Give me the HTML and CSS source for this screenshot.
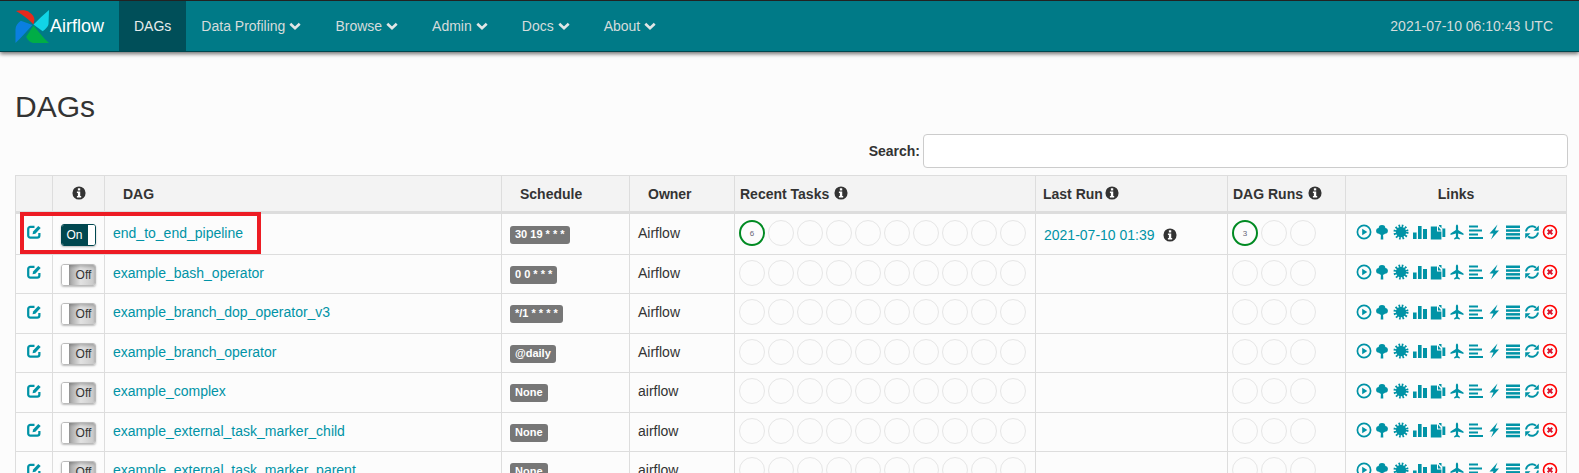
FILE: index.html
```html
<!DOCTYPE html>
<html lang="en">
  <head>
    <meta charset="UTF-8" />
    <title>Airflow - DAGs</title>
    <link rel="stylesheet" href="styles.css">
  </head>
  <body>
    <!-- Icon set, reused through the table -->
    <svg class="defs" aria-hidden="true">
      <symbol id="i-edit" viewBox="0 0 16 16"><path d="M13.2 9.5v2.7a2.3 2.3 0 0 1-2.3 2.3H3.600a2.3 2.3 0 0 1-2.3-2.3V5.300A2.3 2.3 0 0 1 3.600 3H8" fill="none" stroke="currentColor" stroke-width="2.4"/><path d="M6.500 8l5.500-6 2.600 2.300-5.700 6-3 .7z"/></symbol>
      <symbol id="i-info" viewBox="0 0 16 16"><circle cx="8" cy="8" r="7.5"/><rect x="6.7" y="2.6" width="2.7" height="2.5" fill="#fff"/><path d="M5.6 6.4h3.8v5h1.1V13H5.6v-1.6h1.1V8H5.6z" fill="#fff"/></symbol>
      <symbol id="i-play" viewBox="0 0 16 16"><circle cx="8" cy="8" r="6.6" fill="none" stroke="currentColor" stroke-width="1.7"/><path d="M6.2 4.7v6.6L11.3 8z"/></symbol>
      <symbol id="i-tree" viewBox="0 0 16 16"><circle cx="8" cy="4.4" r="3.4"/><circle cx="5" cy="6.800" r="2.900"/><circle cx="11" cy="6.800" r="2.900"/><circle cx="8" cy="7.800" r="3.200"/><path d="M7 9h2l.3 6.500H6.700z"/></symbol>
      <symbol id="i-sun" viewBox="0 0 16 16"><circle cx="8" cy="8" r="5.2"/><circle cx="8" cy="8" r="6" fill="none" stroke="currentColor" stroke-width="3" stroke-dasharray="1.6 1.54"/></symbol>
      <symbol id="i-bars" viewBox="0 0 16 16"><rect x="1" y="8.5" width="3.6" height="6.5"/><rect x="6" y="2" width="3.6" height="13"/><rect x="11" y="5" width="4" height="10"/></symbol>
      <symbol id="i-files" viewBox="0 0 16 16"><path d="M.8 2.500h6.200v4.900h4.400V15.500H.8z"/><path d="M8 2.500l3.400 3.900H8z"/><path d="M9 1h2.500v3.500H15.300v8.500h-2.900V5L9 1.900z"/></symbol>
      <symbol id="i-plane" viewBox="0 0 16 16"><path d="M8 .6c.7 0 1.100 1 1.100 2.200v3.300l5.400 3.400v1.600L9.100 9.500v3.400l1.700 1.300v1.200L8 14.800l-2.800.6v-1.200l1.700-1.300V9.500L1.500 11.100V9.500l5.400-3.400V2.800C6.900 1.600 7.300.6 8 .6z"/></symbol>
      <symbol id="i-align" viewBox="0 0 16 16"><rect x="1" y="1.500" width="9" height="2"/><rect x="1" y="5.500" width="13" height="2"/><rect x="1" y="9.500" width="9" height="2"/><rect x="1" y="13" width="14" height="2"/></symbol>
      <symbol id="i-bolt" viewBox="0 0 16 16"><path d="M11.500.5L3.500 9.500h4L5 15.500 13 6.500H9z"/></symbol>
      <symbol id="i-list" viewBox="0 0 16 16"><rect x="1" y="1.500" width="14" height="2.500"/><rect x="1" y="5.300" width="14" height="2.500"/><rect x="1" y="9.100" width="14" height="2.500"/><rect x="1" y="12.800" width="14" height="2.500"/></symbol>
      <symbol id="i-refresh" viewBox="0 0 16 16"><path d="M2 7.500A6 6 0 0 1 12 3.800" fill="none" stroke="currentColor" stroke-width="1.900"/><path d="M14.800 1.500v5.300H9.500z"/><path d="M14 8.500A6 6 0 0 1 4 12.200" fill="none" stroke="currentColor" stroke-width="1.900"/><path d="M1.200 14.500V9.200h5.300z"/></symbol>
      <symbol id="i-remove" viewBox="0 0 16 16"><circle cx="8" cy="8" r="6.500" fill="none" stroke="#f00" stroke-width="1.600"/><path d="M5.700 5.700l4.600 4.600M10.300 5.700l-4.600 4.600" stroke="#d9142c" stroke-width="2"/></symbol>
    </svg>

    <!-- Top Navigation -->
    <nav class="navbar">
      <a class="brand" href="#">
        <svg class="logo" viewBox="0 0 36 36">
          <path d="M1 2C6 1 12 1 15 3.500 18 5.500 20 8 20 11L19 16C15 11 8 6 1 2z" fill="#e8291c"/>
          <path d="M35 1L34.500 15C34.500 18 31 21 28.500 23L19 16C24 11 29 6 35 1z" fill="#11d4e6"/>
          <path d="M35 35H20C16 35 13 32 11.500 28.500L19 17C24 23 29 30 35 35z" fill="#00ad46"/>
          <path d="M.5 35V21C.5 17 3 14 6 12L18 16.500C12 23 6 30 .5 35z" fill="#0a7fe0"/>
        </svg>
        <span>Airflow</span>
      </a>
      <ul class="nav-list">
        <li class="nav-item active"><a href="#">DAGs</a></li>
        <li class="nav-item"><a href="#">Data Profiling<svg class="chevron" viewBox="0 0 12 9"><path d="M1.300 1.700L6 6.300l4.700-4.600" /></svg></a></li>
        <li class="nav-item"><a href="#">Browse<svg class="chevron" viewBox="0 0 12 9"><path d="M1.300 1.700L6 6.300l4.700-4.600" /></svg></a></li>
        <li class="nav-item"><a href="#">Admin<svg class="chevron" viewBox="0 0 12 9"><path d="M1.300 1.700L6 6.300l4.700-4.600" /></svg></a></li>
        <li class="nav-item"><a href="#">Docs<svg class="chevron" viewBox="0 0 12 9"><path d="M1.300 1.700L6 6.300l4.700-4.600" /></svg></a></li>
        <li class="nav-item"><a href="#">About<svg class="chevron" viewBox="0 0 12 9"><path d="M1.300 1.700L6 6.300l4.700-4.600" /></svg></a></li>
      </ul>
      <span class="clock">2021-07-10 06:10:43 UTC</span>
    </nav>

    <main class="page">
      <h1>DAGs</h1>

      <div class="search-row">
        <label for="search">Search:</label>
        <input type="text" id="search" />
      </div>

      <div class="table-wrap">
        <table>
          <colgroup>
            <col class="c-edit" /><col class="c-toggle" /><col class="c-dag" /><col class="c-schedule" /><col class="c-owner" /><col class="c-tasks" /><col class="c-last" /><col class="c-runs" /><col class="c-links" />
          </colgroup>
          <thead>
            <tr>
              <th></th>
              <th class="center"><svg class="ico-info"><use href="#i-info" /></svg></th>
              <th class="wide">DAG</th>
              <th class="wide">Schedule</th>
              <th class="wide">Owner</th>
              <th>Recent Tasks <svg class="ico-info"><use href="#i-info" /></svg></th>
              <th class="th-last">Last Run <svg class="ico-info"><use href="#i-info" /></svg></th>
              <th>DAG Runs <svg class="ico-info"><use href="#i-info" /></svg></th>
              <th class="center">Links</th>
            </tr>
          </thead>
          <tbody>
            <tr>
              <td class="center"><svg class="ico-edit"><use href="#i-edit" /></svg></td>
              <td class="center"><span class="toggle on"><span class="toggle-label">On</span><span class="toggle-handle"></span></span></td>
              <td><a href="#">end_to_end_pipeline</a></td>
              <td><span class="label">30 19 * * *</span></td>
              <td>Airflow</td>
              <td><div class="dots"><span class="dot success">6</span><span class="dot"></span><span class="dot"></span><span class="dot"></span><span class="dot"></span><span class="dot"></span><span class="dot"></span><span class="dot"></span><span class="dot"></span><span class="dot"></span></div></td>
              <td class="last-run"><a href="#">2021-07-10 01:39</a><svg class="ico-info"><use href="#i-info" /></svg></td>
              <td><div class="dots"><span class="dot success">3</span><span class="dot"></span><span class="dot"></span></div></td>
              <td><div class="links"><svg><use href="#i-play" /></svg><svg><use href="#i-tree" /></svg><svg><use href="#i-sun" /></svg><svg><use href="#i-bars" /></svg><svg><use href="#i-files" /></svg><svg><use href="#i-plane" /></svg><svg><use href="#i-align" /></svg><svg><use href="#i-bolt" /></svg><svg><use href="#i-list" /></svg><svg><use href="#i-refresh" /></svg><svg><use href="#i-remove" /></svg></div></td>
            </tr>
            <tr>
              <td class="center"><svg class="ico-edit"><use href="#i-edit" /></svg></td>
              <td class="center"><span class="toggle"><span class="toggle-handle"></span><span class="toggle-label">Off</span></span></td>
              <td><a href="#">example_bash_operator</a></td>
              <td><span class="label">0 0 * * *</span></td>
              <td>Airflow</td>
              <td><div class="dots"><span class="dot"></span><span class="dot"></span><span class="dot"></span><span class="dot"></span><span class="dot"></span><span class="dot"></span><span class="dot"></span><span class="dot"></span><span class="dot"></span><span class="dot"></span></div></td>
              <td></td>
              <td><div class="dots"><span class="dot"></span><span class="dot"></span><span class="dot"></span></div></td>
              <td><div class="links"><svg><use href="#i-play" /></svg><svg><use href="#i-tree" /></svg><svg><use href="#i-sun" /></svg><svg><use href="#i-bars" /></svg><svg><use href="#i-files" /></svg><svg><use href="#i-plane" /></svg><svg><use href="#i-align" /></svg><svg><use href="#i-bolt" /></svg><svg><use href="#i-list" /></svg><svg><use href="#i-refresh" /></svg><svg><use href="#i-remove" /></svg></div></td>
            </tr>
            <tr>
              <td class="center"><svg class="ico-edit"><use href="#i-edit" /></svg></td>
              <td class="center"><span class="toggle"><span class="toggle-handle"></span><span class="toggle-label">Off</span></span></td>
              <td><a href="#">example_branch_dop_operator_v3</a></td>
              <td><span class="label">*/1 * * * *</span></td>
              <td>Airflow</td>
              <td><div class="dots"><span class="dot"></span><span class="dot"></span><span class="dot"></span><span class="dot"></span><span class="dot"></span><span class="dot"></span><span class="dot"></span><span class="dot"></span><span class="dot"></span><span class="dot"></span></div></td>
              <td></td>
              <td><div class="dots"><span class="dot"></span><span class="dot"></span><span class="dot"></span></div></td>
              <td><div class="links"><svg><use href="#i-play" /></svg><svg><use href="#i-tree" /></svg><svg><use href="#i-sun" /></svg><svg><use href="#i-bars" /></svg><svg><use href="#i-files" /></svg><svg><use href="#i-plane" /></svg><svg><use href="#i-align" /></svg><svg><use href="#i-bolt" /></svg><svg><use href="#i-list" /></svg><svg><use href="#i-refresh" /></svg><svg><use href="#i-remove" /></svg></div></td>
            </tr>
            <tr>
              <td class="center"><svg class="ico-edit"><use href="#i-edit" /></svg></td>
              <td class="center"><span class="toggle"><span class="toggle-handle"></span><span class="toggle-label">Off</span></span></td>
              <td><a href="#">example_branch_operator</a></td>
              <td><span class="label">@daily</span></td>
              <td>Airflow</td>
              <td><div class="dots"><span class="dot"></span><span class="dot"></span><span class="dot"></span><span class="dot"></span><span class="dot"></span><span class="dot"></span><span class="dot"></span><span class="dot"></span><span class="dot"></span><span class="dot"></span></div></td>
              <td></td>
              <td><div class="dots"><span class="dot"></span><span class="dot"></span><span class="dot"></span></div></td>
              <td><div class="links"><svg><use href="#i-play" /></svg><svg><use href="#i-tree" /></svg><svg><use href="#i-sun" /></svg><svg><use href="#i-bars" /></svg><svg><use href="#i-files" /></svg><svg><use href="#i-plane" /></svg><svg><use href="#i-align" /></svg><svg><use href="#i-bolt" /></svg><svg><use href="#i-list" /></svg><svg><use href="#i-refresh" /></svg><svg><use href="#i-remove" /></svg></div></td>
            </tr>
            <tr>
              <td class="center"><svg class="ico-edit"><use href="#i-edit" /></svg></td>
              <td class="center"><span class="toggle"><span class="toggle-handle"></span><span class="toggle-label">Off</span></span></td>
              <td><a href="#">example_complex</a></td>
              <td><span class="label">None</span></td>
              <td>airflow</td>
              <td><div class="dots"><span class="dot"></span><span class="dot"></span><span class="dot"></span><span class="dot"></span><span class="dot"></span><span class="dot"></span><span class="dot"></span><span class="dot"></span><span class="dot"></span><span class="dot"></span></div></td>
              <td></td>
              <td><div class="dots"><span class="dot"></span><span class="dot"></span><span class="dot"></span></div></td>
              <td><div class="links"><svg><use href="#i-play" /></svg><svg><use href="#i-tree" /></svg><svg><use href="#i-sun" /></svg><svg><use href="#i-bars" /></svg><svg><use href="#i-files" /></svg><svg><use href="#i-plane" /></svg><svg><use href="#i-align" /></svg><svg><use href="#i-bolt" /></svg><svg><use href="#i-list" /></svg><svg><use href="#i-refresh" /></svg><svg><use href="#i-remove" /></svg></div></td>
            </tr>
            <tr>
              <td class="center"><svg class="ico-edit"><use href="#i-edit" /></svg></td>
              <td class="center"><span class="toggle"><span class="toggle-handle"></span><span class="toggle-label">Off</span></span></td>
              <td><a href="#">example_external_task_marker_child</a></td>
              <td><span class="label">None</span></td>
              <td>airflow</td>
              <td><div class="dots"><span class="dot"></span><span class="dot"></span><span class="dot"></span><span class="dot"></span><span class="dot"></span><span class="dot"></span><span class="dot"></span><span class="dot"></span><span class="dot"></span><span class="dot"></span></div></td>
              <td></td>
              <td><div class="dots"><span class="dot"></span><span class="dot"></span><span class="dot"></span></div></td>
              <td><div class="links"><svg><use href="#i-play" /></svg><svg><use href="#i-tree" /></svg><svg><use href="#i-sun" /></svg><svg><use href="#i-bars" /></svg><svg><use href="#i-files" /></svg><svg><use href="#i-plane" /></svg><svg><use href="#i-align" /></svg><svg><use href="#i-bolt" /></svg><svg><use href="#i-list" /></svg><svg><use href="#i-refresh" /></svg><svg><use href="#i-remove" /></svg></div></td>
            </tr>
            <tr>
              <td class="center"><svg class="ico-edit"><use href="#i-edit" /></svg></td>
              <td class="center"><span class="toggle"><span class="toggle-handle"></span><span class="toggle-label">Off</span></span></td>
              <td><a href="#">example_external_task_marker_parent</a></td>
              <td><span class="label">None</span></td>
              <td>airflow</td>
              <td><div class="dots"><span class="dot"></span><span class="dot"></span><span class="dot"></span><span class="dot"></span><span class="dot"></span><span class="dot"></span><span class="dot"></span><span class="dot"></span><span class="dot"></span><span class="dot"></span></div></td>
              <td></td>
              <td><div class="dots"><span class="dot"></span><span class="dot"></span><span class="dot"></span></div></td>
              <td><div class="links"><svg><use href="#i-play" /></svg><svg><use href="#i-tree" /></svg><svg><use href="#i-sun" /></svg><svg><use href="#i-bars" /></svg><svg><use href="#i-files" /></svg><svg><use href="#i-plane" /></svg><svg><use href="#i-align" /></svg><svg><use href="#i-bolt" /></svg><svg><use href="#i-list" /></svg><svg><use href="#i-refresh" /></svg><svg><use href="#i-remove" /></svg></div></td>
            </tr>
          </tbody>
        </table>
        <!-- Annotation drawn over the first row -->
        <div class="highlight"></div>
      </div>
    </main>
  </body>
</html>
```

FILE: styles.css
```css
/* General Styling */
html,
body {
  height: 100%;
  overflow: hidden;
}

body {
  margin: 0;
  font-family: "Liberation Sans", Arial, sans-serif;
  font-size: 14px;
  color: #333;
  background-color: #fcfcfc;
}

a {
  color: #0093a6;
  text-decoration: none;
}

.defs {
  display: none;
}

/* Navbar */
.navbar {
  display: flex;
  align-items: stretch;
  height: 50px;
  background-color: #007a87;
  border-top: 1px solid #222;
  border-bottom: 1px solid #00474f;
  box-shadow: 0 2px 4px rgba(0, 0, 0, 0.55);
}

.brand {
  display: flex;
  align-items: center;
  width: 119px;
  box-sizing: border-box;
  padding-left: 15px;
  color: #fff;
  font-size: 18px;
}

.logo {
  width: 35px;
  height: 35px;
  flex: none;
}

.nav-list {
  display: flex;
  margin: 0;
  padding: 0;
  list-style: none;
}

.nav-item a {
  display: flex;
  align-items: center;
  height: 100%;
  padding: 0 15px;
  color: #d5dcdc;
}

.nav-item.active a {
  background-color: #004f59;
  color: #e6ecec;
}

.chevron {
  width: 12px;
  height: 9px;
  margin: 1px 4px 0 4px;
  fill: none;
  stroke: #e0e6e6;
  stroke-width: 2.6;
}

.clock {
  align-self: center;
  margin-left: auto;
  margin-right: 26px;
  color: #d5dcdc;
}

/* Page */
.page {
  padding: 0 12px 0 15px;
}

h1 {
  margin: 38px 0 0;
  font-size: 30px;
  font-weight: 400;
  line-height: 33px;
}

/* Search */
.search-row {
  display: flex;
  align-items: center;
  justify-content: flex-end;
  gap: 3px;
  margin: 11px -1px 0 0;
}

.search-row label {
  font-weight: bold;
}

.search-row input {
  width: 645px;
  height: 34px;
  box-sizing: border-box;
  border: 1px solid #ccc;
  border-radius: 4px;
  background: #fff;
}

/* Table */
.table-wrap {
  position: relative;
  margin-top: 7px;
}

table {
  width: 100%;
  table-layout: fixed;
  border-collapse: collapse;
}

.c-edit { width: 37px; }
.c-toggle { width: 52px; }
.c-dag { width: 397px; }
.c-schedule { width: 128px; }
.c-owner { width: 105px; }
.c-tasks { width: 301px; }
.c-last { width: 192px; }
.c-runs { width: 118px; }

th,
td {
  padding: 0 8px;
  border: 1px solid #ddd;
  text-align: left;
}

th {
  height: 35px;
  padding-left: 5px;
  background-color: #f3f3f3;
  border-bottom-width: 3px;
  white-space: nowrap;
}

td {
  height: 36.5px;
  padding-bottom: 2px;
  line-height: 20px;
}

th.wide {
  padding-left: 18px;
}

th.th-last {
  padding-left: 7px;
}

th.center,
td.center {
  padding: 0 0 2px;
  text-align: center;
}

th.center {
  padding: 0;
}

.ico-info {
  display: inline-block;
  width: 14px;
  height: 14px;
  margin-left: 1px;
  vertical-align: -1px;
  fill: #333;
}

th.center .ico-info {
  margin-left: 0;
}

.th-last .ico-info {
  margin-left: -2px;
}

.ico-edit {
  display: block;
  width: 15px;
  height: 15px;
  margin: -2px 0 0 11px;
  fill: #0093a6;
  color: #0093a6;
}

/* Toggle */
.toggle {
  display: flex;
  width: 35px;
  height: 22px;
  margin: 4px auto 0;
  overflow: hidden;
  box-sizing: border-box;
  border: 1px solid #bbb;
  border-radius: 3px;
  box-shadow: 0 1px 2px rgba(0, 0, 0, 0.25);
  font-size: 12px;
  line-height: 20px;
}

.toggle-label {
  flex: 1;
  padding-left: 3px;
  text-align: center;
  background: linear-gradient(to right, #a0a0a0, #e2e2e2 45%, #c8c8c8);
  box-shadow: inset 0 2px 3px rgba(0, 0, 0, 0.2);
}

.toggle-handle {
  flex: none;
  width: 7px;
  background: #fff;
}

.toggle.on {
  border-color: #00474f;
}

.toggle.on .toggle-label {
  padding: 0;
  background: #00474f;
  box-shadow: none;
  color: #fff;
}

.toggle.on .toggle-handle {
  border-left: 1px solid #00474f;
}

/* Schedule badge */
.label {
  display: inline-block;
  padding: 2px 5px 3px;
  border-radius: 3px;
  background-color: #777;
  color: #fff;
  font-size: 11px;
  font-weight: bold;
  line-height: 13px;
  vertical-align: -1px;
}

/* Status circles */
.dots {
  display: flex;
  gap: 3px;
  margin-left: -4px;
}

.dot {
  flex: none;
  width: 26px;
  height: 26px;
  box-sizing: border-box;
  border: 1.5px solid #e6e6e6;
  border-radius: 50%;
  color: #667;
  font-size: 8px;
  line-height: 23px;
  text-align: center;
}

.dot.success {
  border: 2px solid #008a22;
}

.last-run {
  padding: 3px 8px 0;
  white-space: nowrap;
}

.last-run .ico-info {
  margin-left: 8px;
  vertical-align: -2px;
}

/* Link icons */
.links {
  display: flex;
  gap: 2.7px;
  justify-content: center;
  margin-top: -1px;
  padding-left: 2px;
  color: #0093a6;
  fill: #0093a6;
}

.links svg {
  flex: none;
  width: 16px;
  height: 16px;
}

/* Red annotation box */
.highlight {
  position: absolute;
  left: 5px;
  top: 37px;
  width: 241px;
  height: 42px;
  box-sizing: border-box;
  border: 4px solid #ed1c24;
  pointer-events: none;
}
```
